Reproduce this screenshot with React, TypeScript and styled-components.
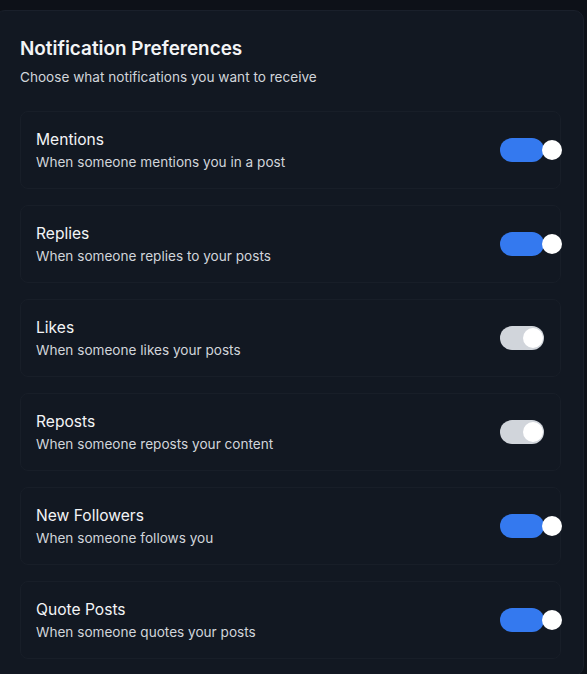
import React, { useState } from "react";
import styled, { createGlobalStyle } from "styled-components";

const Global = createGlobalStyle`
  html, body { margin: 0; padding: 0; background: #0d1118; }
  body { font-family: Inter, "Noto Sans", sans-serif; -webkit-font-smoothing: antialiased; overflow: hidden; }
  * { box-sizing: border-box; }
`;

const Page = styled.div`
  padding-top: 10px;
  min-height: 674px;
  background: #0d1118;
`;

const Card = styled.section`
  margin: 0 3px 0 -5px;
  padding: 24px 22px 16px 24px;
  background: #121822;
  border: 1px solid #1a202b;
  border-radius: 10px;
`;

const Title = styled.h2`
  margin: 0 0 4px 0;
  font-size: 18.9px;
  line-height: 28px;
  font-weight: 600;
  color: #f3f4f6;
`;

const Subtitle = styled.p`
  margin: 0 0 24px 0;
  font-size: 13.6px;
  line-height: 20px;
  color: #d1d5db;
`;

const List = styled.div`
  display: flex;
  flex-direction: column;
  gap: 16px;
`;

const Row = styled.div`
  display: flex;
  align-items: center;
  justify-content: space-between;
  padding: 16px 16px 16px 15px;
  border: 1px solid #181e28;
  border-radius: 8px;
  background: #121822;
`;

const Texts = styled.div`
  display: flex;
  flex-direction: column;
`;

const RowTitle = styled.div`
  font-size: 15.6px;
  line-height: 24px;
  font-weight: 400;
  color: #f3f4f6;
`;

const RowDesc = styled.div`
  font-size: 13.6px;
  line-height: 20px;
  color: #d1d5db;
`;

const Track = styled.button<{ $on: boolean }>`
  position: relative;
  width: 44px;
  height: 24px;
  padding: 0;
  border: none;
  border-radius: 12px;
  background: ${(p) => (p.$on ? "#3479ef" : "#d1d5db")};
  cursor: pointer;
  flex-shrink: 0;
`;

const Knob = styled.span<{ $on: boolean }>`
  position: absolute;
  top: 2px;
  left: ${(p) => (p.$on ? "42px" : "23px")};
  width: 20px;
  height: 20px;
  border-radius: 50%;
  background: #ffffff;
`;

const items = [
  { title: "Mentions", desc: "When someone mentions you in a post", on: true },
  { title: "Replies", desc: "When someone replies to your posts", on: true },
  { title: "Likes", desc: "When someone likes your posts", on: false },
  { title: "Reposts", desc: "When someone reposts your content", on: false },
  { title: "New Followers", desc: "When someone follows you", on: true },
  { title: "Quote Posts", desc: "When someone quotes your posts", on: true },
];

export default function App() {
  const [state, setState] = useState(items.map((i) => i.on));
  return (
    <Page>
      <Global />
      <Card>
        <Title>Notification Preferences</Title>
        <Subtitle>Choose what notifications you want to receive</Subtitle>
        <List>
          {items.map((it, idx) => (
            <Row key={it.title}>
              <Texts>
                <RowTitle>{it.title}</RowTitle>
                <RowDesc>{it.desc}</RowDesc>
              </Texts>
              <Track
                $on={state[idx]}
                aria-pressed={state[idx]}
                onClick={() => setState((s) => s.map((v, i) => (i === idx ? !v : v)))}
              >
                <Knob $on={state[idx]} />
              </Track>
            </Row>
          ))}
        </List>
      </Card>
    </Page>
  );
}
